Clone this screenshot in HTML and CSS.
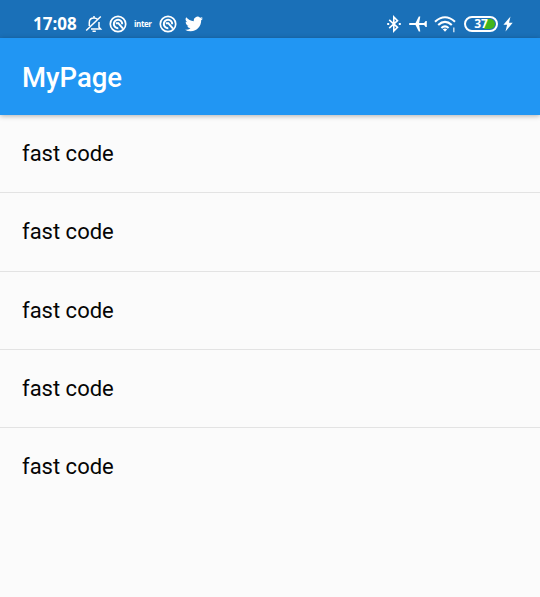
FILE: index.html
```html
<!DOCTYPE html>
<html lang="en">
<head>
<meta charset="utf-8">
<title>MyPage</title>
<link rel="stylesheet" href="styles.css">
</head>
<body>
<div class="status">
  <div class="group">
    <span class="clock">17:08</span>
    <svg class="bell" width="18" height="18" viewBox="0 0 18 18" fill="none" stroke="#fff" stroke-width="1.5"><path d="M4.300 11V7.500C4.300 4.800 6.300 3 9 3c1.400 0 2.600.500 3.400 1.300M14 7v5.200l1.600 1.800H6M9 1v2M1.200 15.500 15.800 1.500M7.500 16.300h3.300"/></svg>
    <svg class="ring" width="18" height="18" viewBox="0 0 18 18" fill="none" stroke="#fff"><circle cx="9" cy="9" r="7.700" stroke-width="1.700"/><path d="M9.300 13.200A4.200 4.200 0 1 1 13.200 9.300M6.800 8.200 9.300 8.200 14 13.600" stroke-width="2"/></svg>
    <span class="inter">inter</span>
    <svg class="ring" width="18" height="18" viewBox="0 0 18 18" fill="none" stroke="#fff"><circle cx="9" cy="9" r="7.700" stroke-width="1.700"/><path d="M9.300 13.200A4.200 4.200 0 1 1 13.200 9.300M6.800 8.200 9.300 8.200 14 13.600" stroke-width="2"/></svg>
    <svg class="bird" width="18" height="16" viewBox="0 2 24 20" fill="#fff"><path d="M23.95 4.57a10 10 0 0 1-2.82.77 4.96 4.96 0 0 0 2.16-2.72c-.95.56-2 .96-3.13 1.19a4.92 4.92 0 0 0-8.38 4.48C7.69 8.1 4.07 6.13 1.64 3.16a4.93 4.93 0 0 0 1.52 6.57 4.9 4.9 0 0 1-2.23-.61v.06a4.92 4.92 0 0 0 3.95 4.83 5 5 0 0 1-2.21.08 4.94 4.94 0 0 0 4.6 3.42A9.87 9.87 0 0 1 0 19.54a14 14 0 0 0 7.55 2.21c9.05 0 14-7.5 14-13.98 0-.21 0-.42-.02-.63a9.94 9.94 0 0 0 2.42-2.57z"/></svg>
  </div>
  <div class="group">
    <svg class="bt" width="16" height="18" viewBox="0 0 16 18" fill="none" stroke="#fff" stroke-width="1.600"><path d="m3.200 4.800 8.300 7.500L7.800 16V2l3.700 3.700-8.300 7.500"/><path d="M1.200 8h2v2h-2zM12.800 8h2v2h-2z" fill="#fff" stroke="none"/></svg>
    <svg class="plane" width="18" height="16" viewBox="0 0 18 16" fill="#fff"><path d="M0 8c0-.700.500-1.100 1.300-1.100h5.200L9.800.500h1.500l-1.200 6.400h5L16.600 5h1.200v6h-1.200l-1.500-1.900h-5l1.200 6.400H9.800L6.500 9.100H1.300C.5 9.100 0 8.700 0 8z"/></svg>
    <svg class="wifi" width="23" height="18" viewBox="0 0 23 18" fill="none" stroke="#fff" stroke-width="2.100"><path d="M1 6.700Q11-2.200 21 6.700M4.200 10Q11 3.800 17.800 10M7.400 13Q11 9.800 14.600 13"/><path d="m8.800 14.300 2.200 2.500 2.200-2.500Q11 12.700 8.800 14.300z" fill="#fff" stroke="none"/><path d="M19.800 12.500v4.800" stroke-width="1.500" opacity=".75"/></svg>
    <div class="battery"><span>37</span></div>
    <svg class="bolt" width="10" height="16" viewBox="0 0 10 16" fill="#fff"><path d="M7.500.5.400 8.700h3.700L2.500 15.500 9.700 6.700H6z"/></svg>
  </div>
</div>
<header class="appbar">MyPage</header>
<ul class="list">
  <li>fast code</li>
  <li>fast code</li>
  <li>fast code</li>
  <li>fast code</li>
  <li>fast code</li>
</ul>
</body>
</html>
```
FILE: styles.css
```css
* { box-sizing: border-box; }
body {
  margin: 0;
  height: 597px;
  overflow: hidden;
  background: #fbfbfb;
  font-family: Roboto, sans-serif;
}
.status {
  height: 38px;
  padding: 10px 27px 0 33px;
  display: flex;
  justify-content: space-between;
  background: #1a70b8;
  color: #fff;
}
.group { display: flex; align-items: center; height: 28px; }
.clock { width: 52px; font: 700 17px/28px "Open Sans", sans-serif; }
.ring { margin-left: 6px; }
.inter {
  width: 18px;
  margin: 0 7px;
  font: 700 8px/16px "Open Sans", sans-serif;
  letter-spacing: -.4px;
}
.inter + .ring { margin-left: 0; }
.bird { margin-left: 8px; }
.plane { margin-left: 7px; }
.wifi { margin-left: 7px; }
.battery {
  width: 34px;
  height: 16px;
  margin-left: 7px;
  padding: 1px;
  border: 2px solid #fff;
  border-radius: 8px;
  background: linear-gradient(90deg, transparent 62%, #42b51b 62%) content-box;
  font: 700 12px/10px "Open Sans", sans-serif;
  text-align: center;
  overflow: hidden;
}
.bolt { margin-left: 5px; }
.appbar {
  position: relative;
  height: 77px;
  padding-left: 22px;
  background: #2196f3;
  box-shadow: 0 1px 5px rgba(0, 0, 0, .3);
  color: #fff;
  font-size: 27.5px;
  font-weight: 500;
  line-height: 79px;
}
.list { margin: 0; padding: 0; list-style: none; }
.list li {
  height: 78.3px;
  padding-left: 22px;
  border-bottom: 1px solid #e3e3e3;
  color: #050505;
  font-size: 22px;
  line-height: 77.4px;
}
.list li:last-child { border-bottom: 0; }
```
